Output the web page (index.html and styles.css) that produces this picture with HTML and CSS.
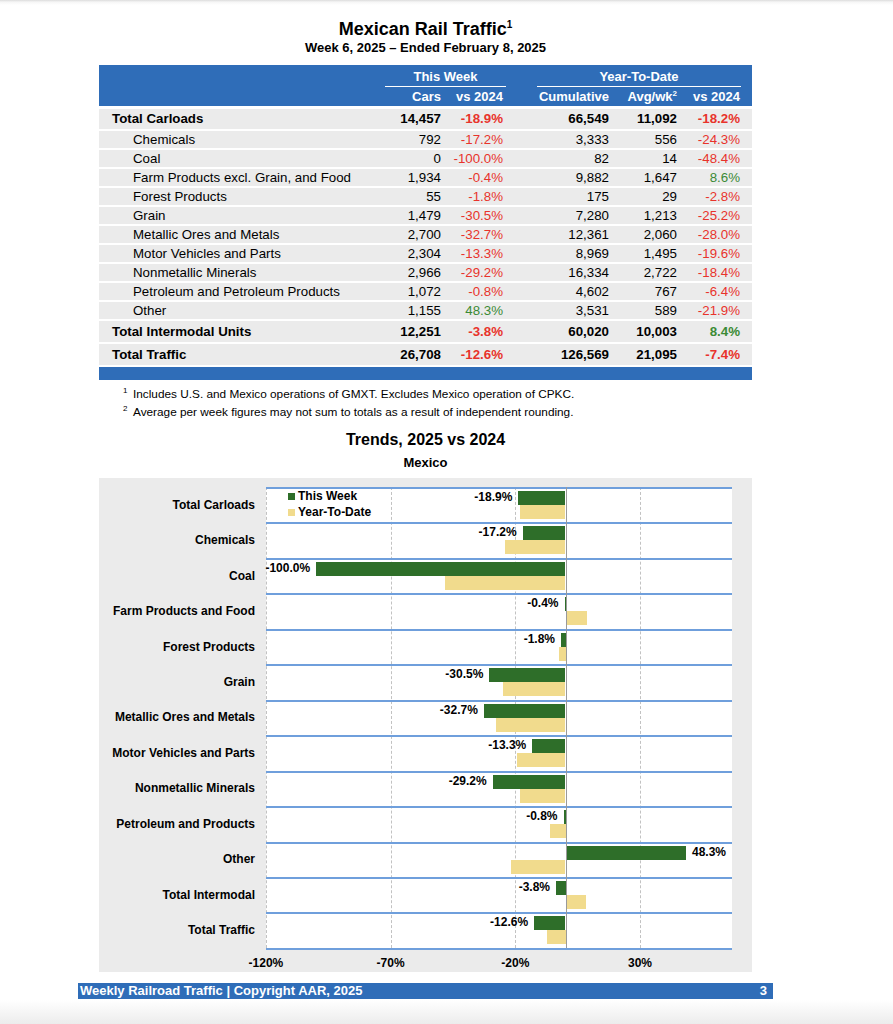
FILE: index.html
```html
<!DOCTYPE html>
<html lang="en">
<head>
<meta charset="utf-8">
<title>Mexican Rail Traffic</title>
<link rel="stylesheet" href="styles.css">
</head>
<body>
<div class="page">
  <h1 class="title">Mexican Rail Traffic<sup>1</sup></h1>
  <p class="subtitle">Week 6, 2025 – Ended February 8, 2025</p>

  <div class="tbl">
    <div class="thead">
      <div class="grid group-row">
        <span class="group g1">This Week</span>
        <span class="group g2">Year-To-Date</span>
      </div>
      <div class="grid col-row">
        <span></span>
        <span class="num">Cars</span>
        <span class="num">vs 2024</span>
        <span class="num">Cumulative</span>
        <span class="num">Avg/wk<sup>2</sup></span>
        <span class="num">vs 2024</span>
      </div>
    </div>
    <div class="tbody">
      <div class="grid row total"><span>Total Carloads</span><span class="num">14,457</span><span class="num neg">-18.9%</span><span class="num">66,549</span><span class="num">11,092</span><span class="num neg">-18.2%</span></div>
      <div class="grid row"><span class="sub">Chemicals</span><span class="num">792</span><span class="num neg">-17.2%</span><span class="num">3,333</span><span class="num">556</span><span class="num neg">-24.3%</span></div>
      <div class="grid row"><span class="sub">Coal</span><span class="num">0</span><span class="num neg">-100.0%</span><span class="num">82</span><span class="num">14</span><span class="num neg">-48.4%</span></div>
      <div class="grid row"><span class="sub">Farm Products excl. Grain, and Food</span><span class="num">1,934</span><span class="num neg">-0.4%</span><span class="num">9,882</span><span class="num">1,647</span><span class="num pos">8.6%</span></div>
      <div class="grid row"><span class="sub">Forest Products</span><span class="num">55</span><span class="num neg">-1.8%</span><span class="num">175</span><span class="num">29</span><span class="num neg">-2.8%</span></div>
      <div class="grid row"><span class="sub">Grain</span><span class="num">1,479</span><span class="num neg">-30.5%</span><span class="num">7,280</span><span class="num">1,213</span><span class="num neg">-25.2%</span></div>
      <div class="grid row"><span class="sub">Metallic Ores and Metals</span><span class="num">2,700</span><span class="num neg">-32.7%</span><span class="num">12,361</span><span class="num">2,060</span><span class="num neg">-28.0%</span></div>
      <div class="grid row"><span class="sub">Motor Vehicles and Parts</span><span class="num">2,304</span><span class="num neg">-13.3%</span><span class="num">8,969</span><span class="num">1,495</span><span class="num neg">-19.6%</span></div>
      <div class="grid row"><span class="sub">Nonmetallic Minerals</span><span class="num">2,966</span><span class="num neg">-29.2%</span><span class="num">16,334</span><span class="num">2,722</span><span class="num neg">-18.4%</span></div>
      <div class="grid row"><span class="sub">Petroleum and Petroleum Products</span><span class="num">1,072</span><span class="num neg">-0.8%</span><span class="num">4,602</span><span class="num">767</span><span class="num neg">-6.4%</span></div>
      <div class="grid row"><span class="sub">Other</span><span class="num">1,155</span><span class="num pos">48.3%</span><span class="num">3,531</span><span class="num">589</span><span class="num neg">-21.9%</span></div>
      <div class="grid row total tall"><span>Total Intermodal Units</span><span class="num">12,251</span><span class="num neg">-3.8%</span><span class="num">60,020</span><span class="num">10,003</span><span class="num pos">8.4%</span></div>
      <div class="grid row total tall"><span>Total Traffic</span><span class="num">26,708</span><span class="num neg">-12.6%</span><span class="num">126,569</span><span class="num">21,095</span><span class="num neg">-7.4%</span></div>
    </div>
    <div class="tfoot"></div>
  </div>

  <div class="notes">
    <p><span class="fn">1</span>Includes U.S. and Mexico operations of GMXT. Excludes Mexico operation of CPKC.</p>
    <p><span class="fn">2</span>Average per week figures may not sum to totals as a result of independent rounding.</p>
  </div>

  <h2 class="chart-title">Trends, 2025 vs 2024</h2>
  <p class="chart-sub">Mexico</p>

  <div class="chart">
    <div class="chart-body">
      <div class="cats">
        <div class="cat">Total Carloads</div>
        <div class="cat">Chemicals</div>
        <div class="cat">Coal</div>
        <div class="cat">Farm Products and Food</div>
        <div class="cat">Forest Products</div>
        <div class="cat">Grain</div>
        <div class="cat">Metallic Ores and Metals</div>
        <div class="cat">Motor Vehicles and Parts</div>
        <div class="cat">Nonmetallic Minerals</div>
        <div class="cat">Petroleum and Products</div>
        <div class="cat">Other</div>
        <div class="cat">Total Intermodal</div>
        <div class="cat">Total Traffic</div>
      </div>
      <div class="plot">
        <div class="gl gl-a"></div>
        <div class="gl gl-b"></div>
        <div class="gl gl-c"></div>
        <div class="gl gl-d"></div>
        <div class="zero"></div>
        <div class="legend">
          <div class="lg-item"><span class="sw sw-tw"></span>This Week</div>
          <div class="lg-item"><span class="sw sw-ytd"></span>Year-To-Date</div>
        </div>

        <div class="band">
          <div class="bar tw" style="margin-left:252.4px;width:47.1px"><span class="val">-18.9%</span></div>
          <div class="bar ytd" style="margin-left:254.1px;width:45.4px"></div>
        </div>
        <div class="band">
          <div class="bar tw" style="margin-left:256.6px;width:42.9px"><span class="val">-17.2%</span></div>
          <div class="bar ytd" style="margin-left:238.9px;width:60.6px"></div>
        </div>
        <div class="band">
          <div class="bar tw" style="margin-left:50.1px;width:249.4px"><span class="val">-100.0%</span></div>
          <div class="bar ytd" style="margin-left:178.8px;width:120.7px"></div>
        </div>
        <div class="band">
          <div class="bar tw" style="margin-left:298.5px;width:1px"><span class="val">-0.4%</span></div>
          <div class="bar ytd" style="margin-left:299.5px;width:21.4px"></div>
        </div>
        <div class="band">
          <div class="bar tw" style="margin-left:295px;width:4.5px"><span class="val">-1.8%</span></div>
          <div class="bar ytd" style="margin-left:292.5px;width:7px"></div>
        </div>
        <div class="band">
          <div class="bar tw" style="margin-left:223.4px;width:76.1px"><span class="val">-30.5%</span></div>
          <div class="bar ytd" style="margin-left:236.7px;width:62.8px"></div>
        </div>
        <div class="band">
          <div class="bar tw" style="margin-left:217.9px;width:81.6px"><span class="val">-32.7%</span></div>
          <div class="bar ytd" style="margin-left:229.7px;width:69.8px"></div>
        </div>
        <div class="band">
          <div class="bar tw" style="margin-left:266.3px;width:33.2px"><span class="val">-13.3%</span></div>
          <div class="bar ytd" style="margin-left:250.6px;width:48.9px"></div>
        </div>
        <div class="band">
          <div class="bar tw" style="margin-left:226.7px;width:72.8px"><span class="val">-29.2%</span></div>
          <div class="bar ytd" style="margin-left:253.6px;width:45.9px"></div>
        </div>
        <div class="band">
          <div class="bar tw" style="margin-left:297.5px;width:2px"><span class="val">-0.8%</span></div>
          <div class="bar ytd" style="margin-left:283.5px;width:16px"></div>
        </div>
        <div class="band">
          <div class="bar tw" style="margin-left:299.5px;width:120.5px"><span class="val after">48.3%</span></div>
          <div class="bar ytd" style="margin-left:244.9px;width:54.6px"></div>
        </div>
        <div class="band">
          <div class="bar tw" style="margin-left:290px;width:9.5px"><span class="val">-3.8%</span></div>
          <div class="bar ytd" style="margin-left:299.5px;width:20.9px"></div>
        </div>
        <div class="band">
          <div class="bar tw" style="margin-left:268.1px;width:31.4px"><span class="val">-12.6%</span></div>
          <div class="bar ytd" style="margin-left:281px;width:18.5px"></div>
        </div>
      </div>
    </div>
    <div class="axis">
      <span>-120%</span>
      <span>-70%</span>
      <span>-20%</span>
      <span>30%</span>
    </div>
  </div>

  <div class="footer">
    <span>Weekly Railroad Traffic | Copyright AAR, 2025</span>
    <span>3</span>
  </div>
</div>
</body>
</html>
```

FILE: styles.css
```css
* {
  box-sizing: border-box;
}

body {
  margin: 0;
  min-height: 1024px;
  font-family: "Liberation Sans", Arial, sans-serif;
  color: #000;
  background: linear-gradient(to bottom, #dcdcdc 0, #f6f6f6 2px, #ffffff 5px, #ffffff 1000px, #ececec 1024px);
}

.page {
  width: 653px;
  margin-left: 99px;
  padding-top: 19px;
}

.title {
  margin: 0;
  text-align: center;
  font-size: 18px;
  line-height: 21px;
  font-weight: bold;
}

.title sup {
  font-size: 10px;
  line-height: 0;
  vertical-align: 7px;
}

.subtitle {
  margin: 0;
  text-align: center;
  font-size: 13px;
  line-height: 16px;
  font-weight: bold;
}

/* table */
.tbl {
  margin-top: 9px;
}

.grid {
  display: grid;
  grid-template-columns: 1fr 60px 62px 106px 68px 63px;
  padding: 0 12px 0 13px;
}

.thead {
  background: #2f6db8;
  color: #fff;
  font-weight: bold;
  font-size: 13px;
}

.group-row {
  padding-top: 4px;
  height: 22px;
}

.group {
  text-align: center;
  line-height: 15px;
  padding-bottom: 2px;
  border-bottom: 1px solid #fff;
}

.g1 {
  grid-column: 2 / 4;
  margin: 0 -3px 0 4px;
}

.g2 {
  grid-column: 4 / 7;
  margin: 0 -1px 0 34px;
}

.col-row {
  height: 19px;
  line-height: 15px;
  padding-top: 2px;
}

.col-row sup {
  font-size: 8px;
  line-height: 0;
  vertical-align: 5px;
}

.num {
  text-align: right;
  white-space: nowrap;
}

.tbody {
  margin-top: 3px;
}

.row {
  background: #ebebeb;
  margin-bottom: 2px;
  height: 17px;
  line-height: 17px;
  font-size: 13.3px;
}

.row.total {
  font-weight: bold;
  height: 20px;
  line-height: 20px;
}

.row.tall {
  height: 21px;
  line-height: 21px;
}

.sub {
  padding-left: 21px;
  white-space: nowrap;
}

.neg {
  color: #e8332b;
}

.pos {
  color: #3b8a35;
}

.tfoot {
  background: #2f6db8;
  height: 13px;
}

/* notes */
.notes {
  margin: 5px 0 0 24px;
  font-size: 11.8px;
  line-height: 18px;
}

.notes p {
  margin: 0;
}

.fn {
  display: inline-block;
  width: 10px;
  font-size: 8px;
  line-height: 8px;
  vertical-align: 5px;
}

/* chart headings */
.chart-title {
  margin: 9px 0 0;
  text-align: center;
  font-size: 16px;
  line-height: 20px;
  font-weight: bold;
}

.chart-sub {
  margin: 5px 0 0;
  text-align: center;
  font-size: 13px;
  line-height: 16px;
  font-weight: bold;
}

/* chart */
.chart {
  margin-top: 7px;
  height: 494px;
  background: #ebebeb;
  padding: 9px 18px 2px 0;
  font-family: "Liberation Sans", Arial, sans-serif;
  font-weight: bold;
  font-size: 12px;
}

.chart-body {
  display: flex;
}

.cats {
  width: 167px;
  padding-right: 11px;
  display: flex;
  flex-direction: column;
}

.cat {
  height: 35.46px;
  display: flex;
  align-items: center;
  justify-content: flex-end;
  white-space: nowrap;
}

.plot {
  position: relative;
  width: 466px;
  background: #fff;
  border-bottom: 2px solid #6f9fdc;
}

.gl {
  position: absolute;
  top: 0;
  bottom: 0;
  border-left: 1px dashed #c2c2c2;
  z-index: 0;
}

.gl-a { left: 0; }
.gl-b { left: 124.7px; }
.gl-c { left: 249.4px; }
.gl-d { left: 374.1px; }

.zero {
  position: absolute;
  top: 0;
  bottom: 0;
  left: 299.5px;
  width: 1px;
  background: #9a9a9a;
  z-index: 2;
}

.legend {
  position: absolute;
  left: 22px;
  top: 1px;
  z-index: 3;
}

.lg-item {
  display: flex;
  align-items: center;
  gap: 3px;
  height: 16px;
}

.sw {
  width: 7px;
  height: 7px;
}

.sw-tw { background: #2e6e29; }
.sw-ytd { background: #f1db8d; }

.band {
  position: relative;
  z-index: 1;
  height: 35.46px;
  border-top: 2px solid #6f9fdc;
  padding-top: 2px;
}

.bar {
  position: relative;
  height: 14px;
}

.bar.tw {
  background: #2e6e29;
}

.bar.ytd {
  background: #f1db8d;
}

.val {
  position: absolute;
  right: calc(100% + 6px);
  top: -2px;
  line-height: 16px;
  white-space: nowrap;
}

.val.after {
  right: auto;
  left: calc(100% + 6px);
}

.axis {
  display: flex;
  margin: 6px 0 0 104.6px;
  line-height: 14px;
}

.axis span {
  width: 124.7px;
  text-align: center;
}

/* footer */
.footer {
  margin: 11px 0 0 -21px;
  width: 695px;
  height: 16px;
  background: #2f6db8;
  color: #fff;
  font-size: 13px;
  line-height: 16px;
  font-weight: bold;
  display: flex;
  justify-content: space-between;
  padding: 0 6px 0 2px;
}
```
